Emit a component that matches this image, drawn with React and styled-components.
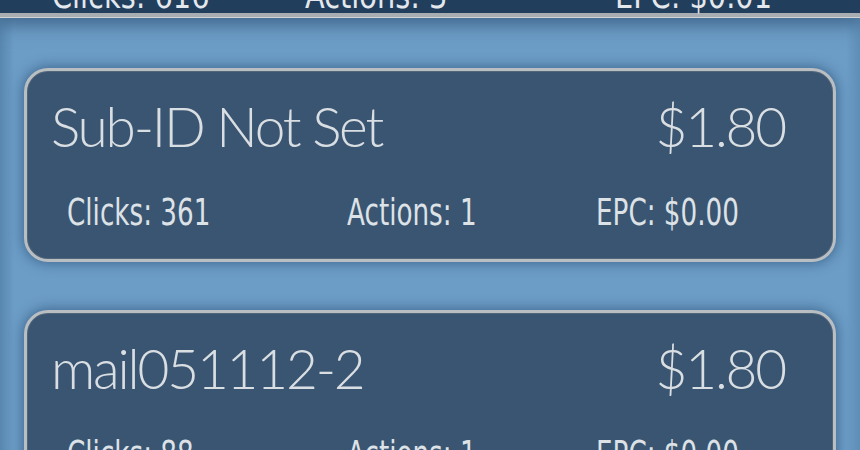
import React from 'react'
import styled, { createGlobalStyle } from 'styled-components'

const GlobalStyle = createGlobalStyle`
  html, body {
    margin: 0;
    padding: 0;
    height: 100%;
    overflow: hidden;
    background: #6c9dc6;
  }
  * { box-sizing: border-box; }
`

const Screen = styled.div`
  height: 100vh;
  overflow: hidden;
  background:
    linear-gradient(90deg, rgba(40, 80, 120, 0.3) 0, rgba(40, 80, 120, 0) 14px,
      rgba(40, 80, 120, 0) calc(100% - 14px), rgba(40, 80, 120, 0.2) 100%),
    #6c9dc6;
`

const SummaryBar = styled.div`
  height: 52px;
  margin-top: -35px;
  padding: 0 52px 0 52px;
  display: grid;
  grid-template-columns: 253px 310px auto;
  align-items: end;
  background: #213e5d;
  border-bottom: 4px solid #a8adb1;
  box-shadow: 0 1px 0 #d0d4d6, 0 8px 16px rgba(30, 60, 95, 0.55);
  position: relative;
  z-index: 1;
`

const SummaryText = styled.span`
  display: inline-block;
  font-family: 'DejaVu Sans', sans-serif;
  font-size: 36px;
  line-height: 34px;
  color: #e4e8ec;
  transform: scaleX(0.8);
  transform-origin: left bottom;
  white-space: nowrap;
`

const List = styled.div`
  display: flex;
  flex-direction: column;
  gap: 48px;
  padding: 51px 24px 0 24px;
`

const Card = styled.div`
  height: 194px;
  border-radius: 24px;
  border: 3px solid #b9bec2;
  background: #3a5571;
  box-shadow:
    inset 0 0 0 1px #52667a,
    0 0 12px 2px rgba(35, 70, 110, 0.55);
  padding: 29px 48px 0 24px;
  display: flex;
  flex-direction: column;
`

const TitleRow = styled.div`
  display: flex;
  justify-content: space-between;
  align-items: baseline;
`

const Title = styled.span`
  font-family: Lato, 'Open Sans', sans-serif;
  font-weight: 300;
  font-size: 55px;
  line-height: 52px;
  letter-spacing: -2.2px;
  color: #d9dee3;
`

const StatRow = styled.div`
  margin-top: 43px;
  padding-left: 16px;
  display: grid;
  grid-template-columns: 280px 249px auto;
`

const Stat = styled.span`
  display: inline-block;
  font-family: 'DejaVu Sans', sans-serif;
  font-size: 38px;
  line-height: 34px;
  color: #dde2e7;
  transform: scaleX(0.69);
  transform-origin: left center;
  white-space: nowrap;
`

const summary = { clicks: 616, actions: 3, epc: '$0.01' }

const subIds = [
  { name: 'Sub-ID Not Set', amount: '$1.80', clicks: 361, actions: 1, epc: '$0.00' },
  { name: 'mail051112-2', amount: '$1.80', clicks: 88, actions: 1, epc: '$0.00' },
]

const SubIdCard = ({ item }) => (
  <Card>
    <TitleRow>
      <Title>{item.name}</Title>
      <Title>{item.amount}</Title>
    </TitleRow>
    <StatRow>
      <Stat>Clicks: {item.clicks}</Stat>
      <Stat>Actions: {item.actions}</Stat>
      <Stat>EPC: {item.epc}</Stat>
    </StatRow>
  </Card>
)

const App = () => (
  <>
    <GlobalStyle />
    <Screen>
      <SummaryBar>
        <SummaryText>Clicks: {summary.clicks}</SummaryText>
        <SummaryText>Actions: {summary.actions}</SummaryText>
        <SummaryText>EPC: {summary.epc}</SummaryText>
      </SummaryBar>
      <List>
        {subIds.map(item => (
          <SubIdCard key={item.name} item={item} />
        ))}
      </List>
    </Screen>
  </>
)

export default App
